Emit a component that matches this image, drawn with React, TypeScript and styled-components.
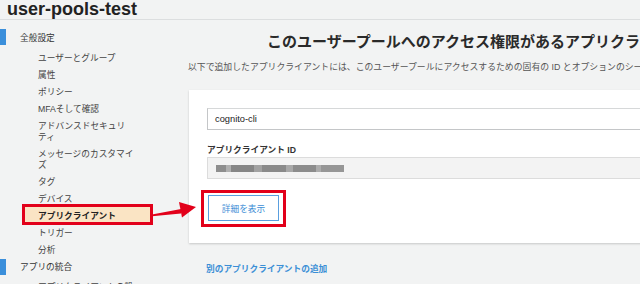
import React from 'react'
import styled, { createGlobalStyle } from 'styled-components'

const GlobalStyle = createGlobalStyle`
  body {
    margin: 0;
    background: #f2f3f3;
    font-family: "Liberation Sans", "Noto Sans CJK JP", sans-serif;
    font-size: 8.7px;
    color: #444;
  }
`

const Page = styled.div`
  position: relative;
  width: 640px;
  height: 284px;
  overflow: hidden;
  background: #f2f3f3;
`

const Header = styled.h1`
  margin: 0;
  height: 19px;
  padding-left: 7px;
  border-bottom: 1px solid #dcdedf;
  font-size: 18px;
  line-height: 19px;
  font-weight: bold;
  color: #222;
`

const Body = styled.div`
  display: flex;
`

const Sidebar = styled.nav`
  width: 180px;
  flex-shrink: 0;
  padding-top: 9px;
`

const Section = styled.div`
  display: flex;
  align-items: center;
  height: 16px;
  color: #333;

  &::before {
    content: '';
    width: 6px;
    height: 16px;
    margin-right: 14px;
    background: #3b8fdb;
  }
`

const List = styled.ul`
  list-style: none;
  margin: 4.5px 0 0;
  padding: 0;
`

const Item = styled.li<{ $active?: boolean }>`
  width: 100px;
  padding: 3px 0 3px 38px;
  line-height: 11px;
  line-break: strict;
  white-space: pre-wrap;
  ${(p) =>
    p.$active &&
    `
    width: 112px;
    margin: -4px 0 0 22px;
    padding: 4px 0 0 13px;
    border: 3px solid #e2001a;
    background: #fae4c4;
    color: #222;
    font-weight: bold;
  `}
`

const Main = styled.main`
  flex: 1;
  min-width: 0;
  padding-left: 9px;
`

const Title = styled.h2`
  margin: 12px 0 0;
  padding-left: 78px;
  font-size: 15px;
  line-height: 20px;
  font-weight: bold;
  color: #2a2a2a;
  white-space: nowrap;
`

const Lead = styled.p`
  margin: 9px 0 0 -1px;
  line-height: 12px;
  font-size: 8.85px;
  color: #555;
  white-space: nowrap;
`

const Card = styled.section`
  width: 480px;
  margin-top: 17px;
  padding: 18px 0 16px 18px;
  background: #fff;
  box-shadow: 0 1px 2px rgba(0, 0, 0, 0.18);
`

const Input = styled.div`
  box-sizing: border-box;
  height: 22px;
  padding-left: 7px;
  border: 1px solid #c4c6c8;
  border-top-color: #d6d8d9;
  display: flex;
  align-items: center;
  font-size: 9.3px;
  color: #222;
`

const Label = styled.div`
  margin-top: 14px;
  line-height: 12px;
  font-weight: bold;
  color: #333;
`

const IdBox = styled.div`
  box-sizing: border-box;
  height: 22px;
  margin-top: 1px;
  padding-left: 8px;
  border: 1px solid #dcdcdc;
  background: #f3f3f3;
  display: flex;
  align-items: center;
`

const Blurred = styled.div`
  width: 128px;
  height: 7px;
  filter: blur(0.7px);
  background: linear-gradient(
    90deg,
    #8e8e8e 0 8%,
    #b0b0b0 8% 12%,
    #868686 12% 30%,
    #a2a2a2 30% 36%,
    #8a8a8a 36% 55%,
    #a8a8a8 55% 60%,
    #8c8c8c 60% 78%,
    #acacac 78% 82%,
    #969696 82% 100%
  );
`

const Callout = styled.div`
  display: inline-flex;
  margin: 11px 0 0 -6px;
  padding: 2px 4px 3px;
  border: 3px solid #e2001a;
  background: #fff;
`

const Button = styled.button`
  width: 71px;
  height: 26px;
  border: 1px solid #5a9fdf;
  background: #fff;
  color: #3d8ed6;
  font-family: inherit;
  font-size: 8.7px;
  padding: 0;
`

const AddLink = styled.a`
  display: block;
  margin: 20px 0 0 17px;
  line-height: 12px;
  font-weight: bold;
  color: #3b8fd6;
  text-decoration: none;
`

const Arrow = styled.svg`
  position: absolute;
  left: 148px;
  top: 198px;
`

const general = [
  'ユーザーとグループ',
  '属性',
  'ポリシー',
  'MFAそして確認',
  'アドバンスドセキュリ\nティ',
  'メッセージのカスタマイ\nズ',
  'タグ',
  'デバイス',
  'アプリクライアント',
  'トリガー',
  '分析',
]

export default function App() {
  return (
    <Page>
      <GlobalStyle />
      <Header>user-pools-test</Header>
      <Body>
        <Sidebar>
          <Section>全般設定</Section>
          <List>
            {general.map((name) => (
              <Item key={name} $active={name === 'アプリクライアント'}>
                {name}
              </Item>
            ))}
          </List>
          <Section>アプリの統合</Section>
          <List>
            <Item>アプリクライアントの設定</Item>
          </List>
        </Sidebar>
        <Main>
          <Title>このユーザープールへのアクセス権限があるアプリクライアント</Title>
          <Lead>
            以下で追加したアプリクライアントには、このユーザープールにアクセスするための固有の ID とオプションのシークレットキーが付与されます。
          </Lead>
          <Card>
            <Input>cognito-cli</Input>
            <Label>アプリクライアント ID</Label>
            <IdBox>
              <Blurred />
            </IdBox>
            <Callout>
              <Button>詳細を表示</Button>
            </Callout>
          </Card>
          <AddLink href="#">別のアプリクライアントの追加</AddLink>
        </Main>
      </Body>
      <Arrow width="52" height="24" viewBox="0 0 52 24">
        <path d="M4 16.5 L33 11 L33 15.5 L4 18.2 Z" fill="#e2001a" />
        <path d="M31 4 L48 9 L34 19.5 Z" fill="#e2001a" />
      </Arrow>
    </Page>
  )
}
